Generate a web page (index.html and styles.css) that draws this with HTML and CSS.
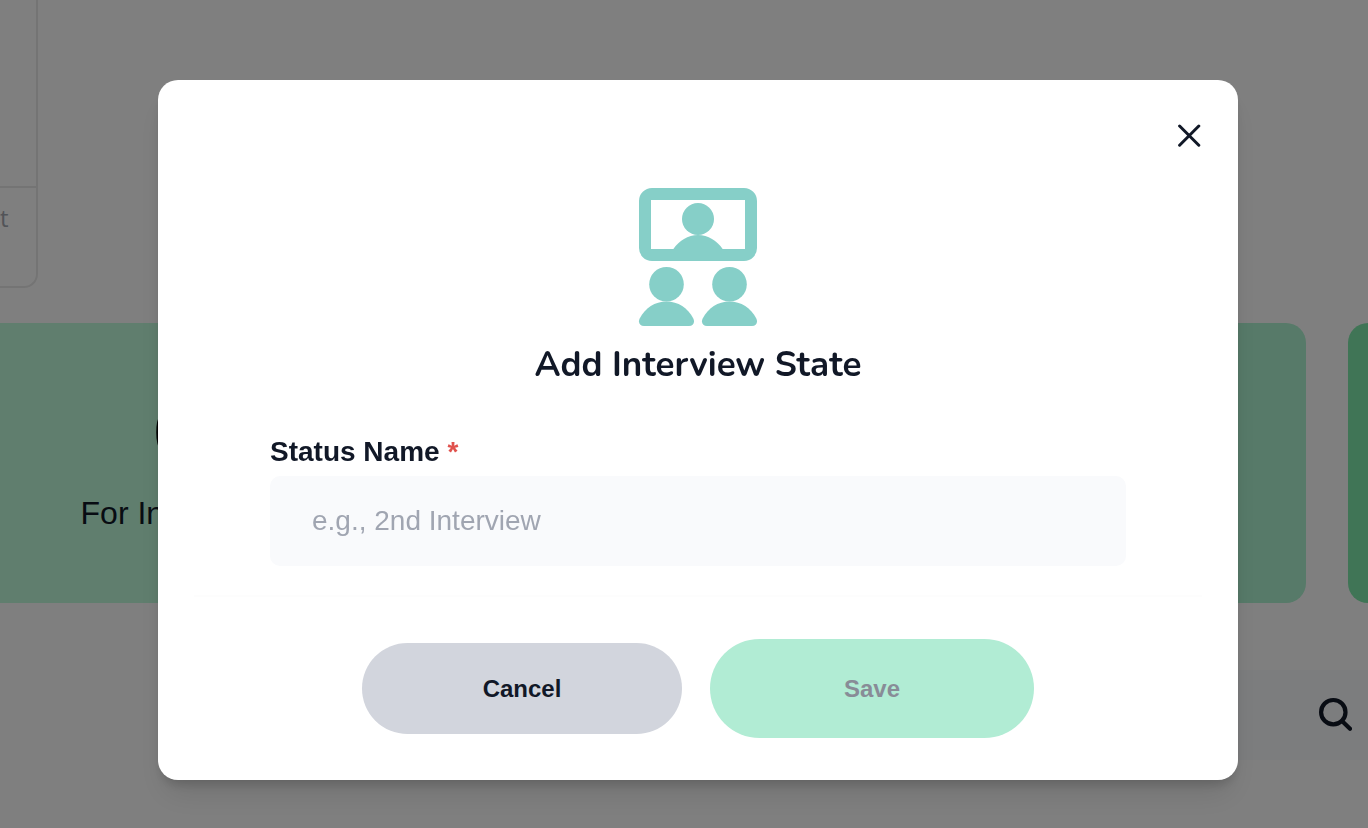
FILE: index.html
```html
<!DOCTYPE html>
<html lang="en">
<head>
<meta charset="utf-8">
<meta name="viewport" content="width=device-width, initial-scale=1">
<title>Add Interview State</title>
<link rel="stylesheet" href="styles.css">
</head>
<body>
<main class="page">
  <section class="panel">
    <div class="panel-body"></div>
    <div class="panel-footer">t</div>
  </section>
  <section class="stats">
    <article class="stat stat-mint">
      <span class="stat-value">0</span>
      <span class="stat-label">For Interview</span>
    </article>
    <article class="stat stat-aqua"></article>
    <article class="stat stat-green"></article>
  </section>
  <div class="toolbar">
    <button class="icon-button" type="button" aria-label="Search">
      <svg width="36" height="36" viewBox="0 0 36 36" fill="none" stroke="#111827" stroke-width="4.200" stroke-linecap="round">
        <circle cx="17.300" cy="15.200" r="12.200"/>
        <path d="M26 24L34 31.800"/>
      </svg>
    </button>
  </div>
</main>
<div class="overlay">
  <div class="dialog" role="dialog" aria-modal="true" aria-labelledby="dialog-title">
    <div class="dialog-top">
      <button class="icon-button" type="button" aria-label="Close">
        <svg width="24" height="24" viewBox="0 0 24 24" fill="none" stroke="#111827" stroke-width="3" stroke-linecap="round">
          <path d="M1.600 2L20.800 21.200M20.800 2L1.600 21.200"/>
        </svg>
      </button>
    </div>
    <form class="form">
      <svg class="hero" width="120" height="138" viewBox="0 0 120 138" fill="#86cfc8" aria-hidden="true">
        <path fill-rule="evenodd" d="M14 0H106A13 13 0 0 1 119 13V60A13 13 0 0 1 106 73H14A13 13 0 0 1 1 60V13A13 13 0 0 1 14 0ZM13 12V61H107V12Z"/>
        <circle cx="60" cy="31" r="16"/>
        <path d="M35 61.500C41 52.500 50 47 60 47S79 52.500 85 61.500Z"/>
        <circle cx="28.500" cy="96.300" r="17.300"/>
        <circle cx="91.500" cy="96.300" r="17.300"/>
        <path id="body" d="M28.500 113.500C40 113.500 50 120 55.300 130.500C57.300 134.800 55 138 51 138H6C2 138 -.3 134.800 1.700 130.500C7 120 17 113.500 28.500 113.500Z"/>
        <use href="#body" x="63"/>
      </svg>
      <h1 class="title" id="dialog-title">Add Interview State</h1>
      <div class="field">
        <label class="label" for="status-name">Status Name <span class="required">*</span></label>
        <input class="input" id="status-name" type="text" placeholder="e.g., 2nd Interview">
      </div>
      <hr class="divider">
      <div class="actions">
        <button class="button button-cancel" type="button">Cancel</button>
        <button class="button button-save" type="submit" disabled>Save</button>
      </div>
    </form>
  </div>
</div>
</body>
</html>
```
FILE: styles.css
```css
* {
  box-sizing: border-box;
}

body {
  margin: 0;
  overflow: hidden;
  background: #fff;
  color: #111827;
  font-family: "Helvetica Neue", "Liberation Sans", Arial, sans-serif;
}

button,
input {
  font: inherit;
}

.page {
  display: flex;
  flex-direction: column;
  align-items: flex-start;
}

.panel {
  width: 38px;
  border: 2px solid #e9e9e9;
  border-width: 0 2px 2px 0;
  border-bottom-right-radius: 14px;
}

.panel-body {
  height: 188px;
  border-bottom: 2px solid #e9e9e9;
}

.panel-footer {
  height: 98px;
  padding-top: 16px;
  color: #a5a8b0;
  font-family: "Open Sans", sans-serif;
  font-size: 24px;
  line-height: 28px;
}

.stats {
  display: grid;
  grid-template-columns: 346px 1fr 20px;
  gap: 42px;
  align-self: stretch;
  margin: 35px 0 67px;
}

.stat {
  display: flex;
  flex-direction: column;
  align-items: center;
  gap: 24px;
  height: 280px;
  padding-top: 74px;
  border-radius: 20px;
}

.stat-mint {
  border-radius: 0 20px 20px 0;
  background: #c0fcdc;
}

.stat-aqua {
  background: #aef4d2;
}

.stat-green {
  border-radius: 20px 0 0 20px;
  background: #80eaac;
}

.stat-value {
  color: #000;
  font-size: 70px;
  line-height: 72px;
}

.stat-label {
  font-size: 32px;
  line-height: 40px;
}

.toolbar {
  display: flex;
  align-items: center;
  justify-content: flex-end;
  align-self: stretch;
  height: 90px;
  margin-left: 200px;
  padding-right: 16px;
  background: #f9fafc;
}

.overlay {
  position: fixed;
  inset: 0;
  padding: 80px 130px 48px 158px;
  background: rgba(0, 0, 0, 0.5);
}

.dialog {
  padding: 44px 36px 42px;
  border-radius: 20px;
  background: #fff;
  box-shadow: 0 20px 30px -6px rgba(0, 0, 0, 0.1), 0 8px 12px -4px rgba(0, 0, 0, 0.18);
}

.dialog-top {
  display: flex;
  justify-content: flex-end;
}

.icon-button {
  display: flex;
  padding: 0;
  border: 0;
  background: none;
}

.form {
  display: flex;
  flex-direction: column;
  align-items: center;
  padding-top: 40px;
}

.title {
  margin: 17px 0 49px;
  font-family: Nunito, Lato, sans-serif;
  font-size: 35px;
  font-weight: 700;
  line-height: 44px;
}

.field {
  display: flex;
  flex-direction: column;
  gap: 8px;
  align-self: stretch;
  padding: 0 76px;
}

.label {
  font-size: 28px;
  font-weight: 700;
  line-height: 32px;
}

.required {
  color: #e0524d;
}

.input {
  width: 100%;
  height: 90px;
  padding: 0 42px;
  border: 0;
  border-radius: 10px;
  background: #f9fafc;
  color: #111827;
  font-size: 28px;
}

.input::placeholder {
  color: #a0a5b1;
  opacity: 1;
}

.divider {
  align-self: stretch;
  height: 2px;
  margin: 29px 0 42px;
  border: 0;
  background: #fdfdfd;
}

.actions {
  display: flex;
  align-items: center;
  gap: 28px;
}

.button {
  border: 0;
  border-radius: 50px;
  color: #111827;
  font-size: 24px;
  font-weight: 700;
}

.button-cancel {
  width: 320px;
  height: 91px;
  background: #d2d5dd;
}

.button-save {
  width: 324px;
  height: 99px;
  background: #b1ecd4;
  color: #888c97;
}
```
